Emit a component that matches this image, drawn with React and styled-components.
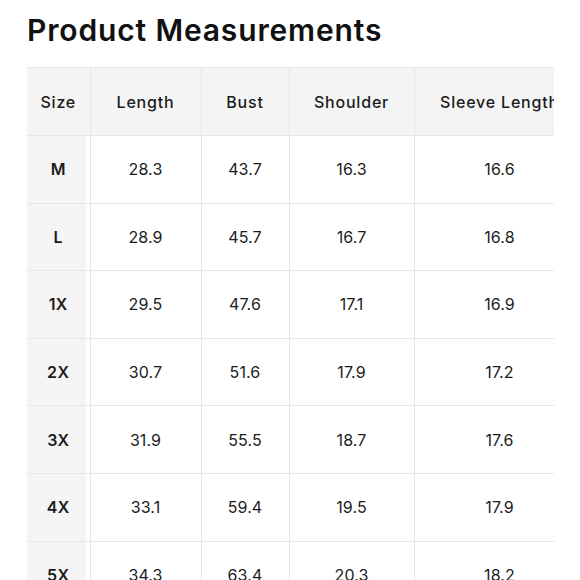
import React from "react";
import styled, { createGlobalStyle } from "styled-components";

const Global = createGlobalStyle`
  html, body { margin: 0; padding: 0; background: #fff; }
  body { font-family: Inter, "Noto Sans", sans-serif; color: #1b1b1b; }
`;

const Page = styled.div`
  width: 580px;
  height: 580px;
  overflow: hidden;
  padding: 0 0 0 27px;
  box-sizing: border-box;
`;

const Title = styled.h1`
  margin: 0;
  padding-top: 12px;
  height: 67px;
  box-sizing: border-box;
  font-size: 30px;
  line-height: 36px;
  font-weight: 600;
  letter-spacing: 0.85px;
  color: #111;
`;

const Scroller = styled.div`
  width: 527px;
  overflow: hidden;
`;

const Table = styled.table`
  border-collapse: collapse;
  table-layout: fixed;
  width: 558px;
  border-top: 1px solid #e6e6e6;
`;

const HeadCell = styled.th`
  height: 67px;
  padding: 0;
  background: #f4f4f4;
  font-size: 16px;
  font-weight: 500;
  letter-spacing: 0.8px;
  text-align: center;
  white-space: nowrap;
  overflow: hidden;
  border-right: 1px solid #e6e6e6;
  border-bottom: 1px solid #e6e6e6;
  color: #1b1b1b;
`;

const Cell = styled.td`
  height: 66.6px;
  padding: 0;
  font-size: 16px;
  font-weight: ${(p) => (p.$label ? 600 : 400)};
  letter-spacing: ${(p) => (p.$label ? "0.4px" : "0.1px")};
  text-align: center;
  white-space: nowrap;
  border-right: 1px solid #e6e6e6;
  border-bottom: 1px solid #e6e6e6;
  background: ${(p) =>
    p.$label
      ? "linear-gradient(to right, #f5f5f5 calc(100% - 4px), #fff calc(100% - 4px))"
      : "#fff"};
  color: #1b1b1b;
`;

const Col = styled.col``;

const widths = [63, 111, 88, 125, 171];
const headers = ["Size", "Length", "Bust", "Shoulder", "Sleeve Length"];
const rows = [
  ["M", "28.3", "43.7", "16.3", "16.6"],
  ["L", "28.9", "45.7", "16.7", "16.8"],
  ["1X", "29.5", "47.6", "17.1", "16.9"],
  ["2X", "30.7", "51.6", "17.9", "17.2"],
  ["3X", "31.9", "55.5", "18.7", "17.6"],
  ["4X", "33.1", "59.4", "19.5", "17.9"],
  ["5X", "34.3", "63.4", "20.3", "18.2"],
];

export default function App() {
  return (
    <>
      <Global />
      <Page>
        <Title>Product Measurements</Title>
        <Scroller>
          <Table>
            <colgroup>
              {widths.map((w, i) => (
                <Col key={i} style={{ width: w }} />
              ))}
            </colgroup>
            <thead>
              <tr>
                {headers.map((h) => (
                  <HeadCell key={h}>{h}</HeadCell>
                ))}
              </tr>
            </thead>
            <tbody>
              {rows.map((r) => (
                <tr key={r[0]}>
                  {r.map((v, i) => (
                    <Cell key={i} $label={i === 0}>
                      {v}
                    </Cell>
                  ))}
                </tr>
              ))}
            </tbody>
          </Table>
        </Scroller>
      </Page>
    </>
  );
}
